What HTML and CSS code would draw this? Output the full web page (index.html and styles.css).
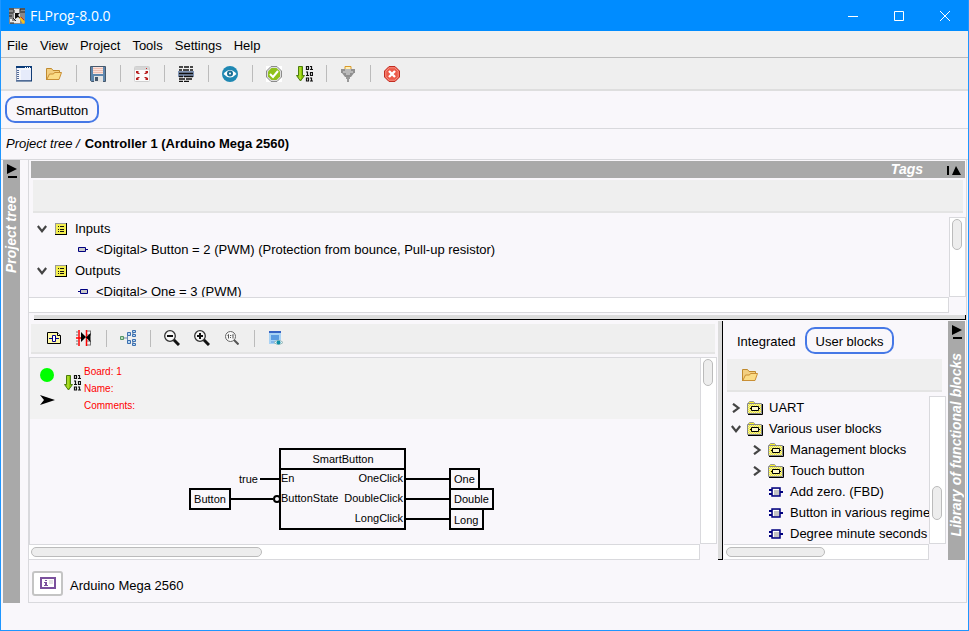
FILE: index.html
```html
<!DOCTYPE html>
<html lang="en">
<head>
    <meta charset="UTF-8">
    <meta name="viewport" content="width=device-width, initial-scale=1.0">
    <title>FLProg-8.0.0</title>
    <link rel="stylesheet" href="styles.css">
</head>
<body>
    <!-- Shared icons -->
    <svg class="sprite" aria-hidden="true">
        <defs>
            <pattern id="dither" width="2" height="2" patternUnits="userSpaceOnUse">
                <path d="M0 0h2v2H0z" fill="#f8f020"/>
                <path d="M0 0h1v1H0zM1 1h1v1H1z" fill="#e6e6c0"/>
            </pattern>
        </defs>
        <symbol id="folder-open" viewBox="0 0 16 16">
            <path d="M.5 14V2.500h5l1.500 2h6.500V7" fill="#f3cf80" stroke="#c08a2e"/>
            <path d="M.8 13.500 3.500 8h4l1-1.500h7L13 13.500z" fill="#fbdc86" stroke="#c98f35"/>
        </symbol>
        <symbol id="compile" viewBox="0 0 17 16">
            <path d="M2.500.5h4v9h2L4.500 15 .5 9.500h2z" fill="#8cc800" stroke="#4c7d0c"/>
            <path d="M4 1v12" stroke="#c3ea4e"/>
            <path d="M10.500.5h2v3h-2zM14 .5h1.500V4M14 3.500h3M10 6h1.500v4M10 9.500h3M14.500 6.500h2v3h-2zM10.500 12h2v3h-2zM14 12h1.500v3.500M14 15h3" fill="none" stroke="#111" stroke-width="1.200"/>
        </symbol>
        <symbol id="tag-list" viewBox="0 0 12 12">
            <path d="M0 0h12v12H0z" fill="#000"/>
            <path d="M0 0h11v11H0z" fill="#999"/>
            <path d="M1 1h10v10H1z" fill="#f3ee50"/>
            <path d="M3 3.500h1M3 6.500h1M3 8.500h1M5 3.500h4M5 6.500h4M5 8.500h4" stroke="#111"/>
        </symbol>
        <symbol id="block-folder" viewBox="0 0 16 14">
            <path d="M1.500 3V1.500l1-1h4l1 1V3" fill="#f7f12b" stroke="#999"/>
            <path d="M.5 2.500h14v10H.5z" fill="url(#dither)" stroke="#888"/>
            <path d="M1 13.500h14.500V3" fill="none" stroke="#000"/>
            <path d="M4.500 5.500h7v4h-7zM3 7.500h1M12 7.500h1M8 5v1M8 9v1" fill="#fffbd0" stroke="#000"/>
        </symbol>
        <symbol id="block" viewBox="0 0 14 10">
            <path d="M0 3h3M0 7h3M11 5h3" stroke="#000080" stroke-width="2"/>
            <path d="M3 1h8v8H3z" fill="#c4c4c4" stroke="#000080" stroke-width="1.500"/>
            <path d="M4 2.500h6M4.500 2v6" stroke="#fff"/>
        </symbol>
        <symbol id="tag-in" viewBox="0 0 10 6">
            <path d="M.5.5h7v4h-7zM8 2.500h2" fill="#c8c8c8" stroke="#000080"/>
        </symbol>
        <symbol id="tag-out" viewBox="0 0 10 6">
            <path d="M2.500.5h7v4h-7zM0 2.500h2" fill="#c8c8c8" stroke="#000080"/>
        </symbol>
        <symbol id="chevron-down" viewBox="0 0 10 8">
            <path d="M.8 1L5 6.200 9.200 1" fill="none" stroke="#444" stroke-width="2.200"/>
        </symbol>
        <symbol id="chevron-right" viewBox="0 0 8 10">
            <path d="M1 .8L6.500 5 1 9.200" fill="none" stroke="#444" stroke-width="2.200"/>
        </symbol>
        <symbol id="expand" viewBox="0 0 10 14">
            <path d="M0 0l10 5-10 5z"/>
            <path d="M1 12h9v2H1z"/>
        </symbol>
    </svg>

    <div class="window">
        <header class="titlebar">
            <svg class="app-icon" width="16" height="16" viewBox="0 0 16 16">
                <path d="M0 0h16v16H0z" fill="#888"/>
                <path d="M5 1h6v14H5zM1 11h5v4H1z" fill="#e9e9e9"/>
                <path d="M0 1h5M0 5h4M11 1h5M12 4h4M0 8h3M1 15h4M3 12h3M5 2v3M11 1v4M4 10l3 3" stroke="#222"/>
                <path d="M6 5h5l-2 2 6 7-6-5-3 2z" fill="#111"/>
                <path d="M10 10l2-1 4 5-2 2z" fill="#f2c11c"/>
                <path d="M12 9l3 3" stroke="#c22" />
            </svg>
            <h1>FLProg-8.0.0</h1>
            <div class="window-buttons">
                <button aria-label="Minimize"><svg width="10" height="10"><path d="M0 5.500h10" stroke="#fff"/></svg></button>
                <button aria-label="Maximize"><svg width="10" height="10"><path d="M.5.500h9v9h-9z" fill="none" stroke="#fff"/></svg></button>
                <button aria-label="Close"><svg width="10" height="10"><path d="M0 0l10 10M10 0L0 10" stroke="#fff"/></svg></button>
            </div>
        </header>

        <nav class="menubar">
            <button>File</button>
            <button>View</button>
            <button>Project</button>
            <button>Tools</button>
            <button>Settings</button>
            <button>Help</button>
        </nav>

        <div class="toolbar main-toolbar">
            <button aria-label="New project">
                <svg width="16" height="16" viewBox="0 0 16 16">
                    <path d="M.5.500h15v14H.5z" fill="#f4f6fc" stroke="#8e9bb8"/>
                    <path d="M0 0h16v2H0z" fill="#0b3c78"/>
                    <path d="M9 1.500h1M11 1.500h1M13 1.500h1" stroke="#fff"/>
                    <path d="M5 4h10v10H5z" fill="#e6ebfa"/>
                    <path d="M1 4.500h2M1 6.500h2M1 8.500h2M1 10.500h2M1 12.500h2" stroke="#526b96"/>
                    <path d="M0 15h16M15.500 2v13" stroke="#123d75"/>
                </svg>
            </button>
            <button aria-label="Open project"><svg width="16" height="16"><use href="#folder-open"/></svg></button>
            <span class="separator"></span>
            <button aria-label="Save">
                <svg width="16" height="16" viewBox="0 0 16 16">
                    <path d="M.5.500h15v15h-14l-1-1z" fill="#5f87ad" stroke="#46586c"/>
                    <path d="M3 1h10v7H3z" fill="#fbe3dc"/>
                    <path d="M3 2.500h10M3 4.500h10M3 6.500h10" stroke="#eebfb2"/>
                    <path d="M4 10h9v6H4z" fill="#e3e3e3"/>
                    <path d="M5 11h3v4H5z" fill="#46586c"/>
                </svg>
            </button>
            <span class="separator"></span>
            <button aria-label="Fit to window">
                <svg width="16" height="16" viewBox="0 0 16 16">
                    <rect x=".5" y=".5" width="15" height="15" rx="1" fill="#fbfbfb" stroke="#cfcfcf"/>
                    <path d="M1 1h14v3H1z" fill="#d6d6d6"/>
                    <path d="M12 2.500h1" stroke="#c22"/>
                    <path d="M2 5h3L4 6l2 2-2 0-2-1zM14 5h-3l1 1-2 2 2 0 2-1zM2 14h3l-1-1 2-2-2 0-2 1zM14 14h-3l1-1-2-2 2 0 2 1z" fill="#b81d1d"/>
                </svg>
            </button>
            <span class="separator"></span>
            <button aria-label="Tag table">
                <svg width="16" height="16" viewBox="0 0 16 16">
                    <path d="M0 5h16v6H0z" fill="#8094b4"/>
                    <path d="M1 1h4M6 1h5M12 1h3M1 4h3M5 4h6M12 4h3M1 7.500h14M1 10.500h4M6 10.500h9M1 13h6M8 13h6M1 15.500h4M6 15.500h5" stroke="#111" stroke-width="1.500"/>
                </svg>
            </button>
            <span class="separator"></span>
            <button aria-label="Preview">
                <svg width="16" height="16" viewBox="0 0 16 16">
                    <circle cx="8" cy="8" r="8" fill="#1f88b3"/>
                    <path d="M1.500 8Q8 0 14.500 8 8 15 1.500 8z" fill="#fff"/>
                    <circle cx="8" cy="7.500" r="3" fill="#1b6f95"/>
                    <circle cx="8" cy="7.500" r="1" fill="#fff"/>
                </svg>
            </button>
            <span class="separator"></span>
            <button aria-label="Check">
                <svg width="16" height="16" viewBox="0 0 16 16">
                    <path d="M0 0h16v16H0z" fill="#fff"/>
                    <path d="M5 .5h6L15.500 5v6L11 15.500H5L.5 11V5z" fill="#ddd" stroke="#8b8b8b"/>
                    <path d="M5.500 2h5L14 5.500v5L10.500 14h-5L2 10.500v-5z" fill="#8fc11b"/>
                    <path d="M4 8l3 3 5-6" fill="none" stroke="#fff" stroke-width="2"/>
                </svg>
            </button>
            <button aria-label="Compile"><svg width="17" height="16"><use href="#compile"/></svg></button>
            <span class="separator"></span>
            <button aria-label="Port">
                <svg width="14" height="16" viewBox="0 0 14 16">
                    <path d="M4 .5h6v3H4z" fill="#fff0b8" stroke="#d99a2b"/>
                    <path d="M0 3h14v4h-1L10 11H4L1 7H0z" fill="#909090"/>
                    <path d="M4 4h6M2 6h10M5 8h4" stroke="#e2e2e2"/>
                    <path d="M5 11h4v2H8v3H6v-3H5z" fill="#999"/>
                </svg>
            </button>
            <span class="separator"></span>
            <button aria-label="Close project">
                <svg width="16" height="16" viewBox="0 0 16 16">
                    <path d="M5 .5h6L15.500 5v6L11 15.500H5L.5 11V5z" fill="#ec5b4a" stroke="#c22d22"/>
                    <path d="M5.200 1.800h5.600L14.200 5.200v5.600L10.800 14.200H5.200L1.800 10.800V5.200z" fill="none" stroke="#f79a8d" stroke-width=".8"/>
                    <path d="M5 5l6 6M11 5l-6 6" stroke="#fff" stroke-width="2.400"/>
                </svg>
            </button>
        </div>

        <div class="project-tabs">
            <button class="tab active">SmartButton</button>
        </div>

        <div class="breadcrumb"><i>Project tree /</i><b>Controller 1 (Arduino Mega 2560)</b></div>

        <main class="main">
            <aside class="side-strip">
                <button aria-label="Show project tree"><svg width="10" height="14"><use href="#expand"/></svg></button>
                <span>Project tree</span>
            </aside>

            <div class="content">
                <section class="tags-panel">
                    <div class="tags-header">
                        <h2>Tags</h2>
                        <button aria-label="Collapse tags"><svg width="14" height="10"><path d="M0 1h2v9H0zM5 10l4-9 5 9z"/></svg></button>
                    </div>
                    <div class="tags-toolbar"></div>
                    <div class="tags-body">
                        <ul class="tree tags-tree">
                            <li class="group"><svg width="10" height="8"><use href="#chevron-down"/></svg><svg class="icon" width="12" height="12"><use href="#tag-list"/></svg>Inputs</li>
                            <li class="leaf"><svg class="icon" width="10" height="6"><use href="#tag-in"/></svg>&lt;Digital&gt; Button = 2 (PWM) (Protection from bounce, Pull-up resistor)</li>
                            <li class="group"><svg width="10" height="8"><use href="#chevron-down"/></svg><svg class="icon" width="12" height="12"><use href="#tag-list"/></svg>Outputs</li>
                            <li class="leaf"><svg class="icon" width="10" height="6"><use href="#tag-out"/></svg>&lt;Digital&gt; One = 3 (PWM)</li>
                        </ul>
                        <div class="scroll-y"><div class="thumb tags-thumb"></div></div>
                        <div class="scroll-x"></div>
                    </div>
                </section>

                <div class="splitter-x"></div>

                <div class="workspace">
                    <section class="editor">
                        <div class="toolbar editor-toolbar">
                            <button aria-label="Add board">
                                <svg width="14" height="12" viewBox="0 0 14 12">
                                    <path d="M.5.500h10l3 3v8H.5z" fill="#fff9a8" stroke="#000"/>
                                    <path d="M10.500.500v3h3" fill="#fff" stroke="#000"/>
                                    <path d="M5.500 3.500h3v6h-3zM2 6.500h3.500M8.500 6.500H12" fill="#fff" stroke="#00008b"/>
                                </svg>
                            </button>
                            <button aria-label="Go to board">
                                <svg width="16" height="16" viewBox="0 0 16 16">
                                    <path d="M0 2h2M0 5h2M0 11h2M0 14h2M11 1h4M11 5h4M11 11h4M11 15h4M14.500 1v4M14.500 11v4" stroke="#777"/>
                                    <path d="M3 0v16M0 8h6M10.500 0v16" stroke="#f00" stroke-width="1.500"/>
                                    <path d="M5 2v10l5-5zM14.500 3v9L10 7.500z"/>
                                </svg>
                            </button>
                            <span class="separator"></span>
                            <button aria-label="Block tree">
                                <svg width="16" height="16" viewBox="0 0 16 16">
                                    <path d="M3 8h4M7.500 3.500v9M7.500 3.500h2M7.500 12.500h2M12 3h1V1.500M13 5.500V3M12 13h1v1.500M13 10.500V13" fill="none" stroke="#6687b0"/>
                                    <path d="M.5 6.500h3v3h-3z" fill="#b9e0b9" stroke="#549466"/>
                                    <path d="M7.500 2.500h3v3h-3zM12.500.500h3v2h-3zM12.500 4.500h3v2h-3zM7.500 10.500h3v3h-3zM12.500 9.500h3v2h-3zM12.500 13.500h3v2h-3z" fill="#b5d8f5" stroke="#3d6fae"/>
                                </svg>
                            </button>
                            <span class="separator"></span>
                            <button aria-label="Zoom out">
                                <svg width="16" height="16" viewBox="0 0 16 16">
                                    <path d="M9.500 9.500l5.500 5.500" stroke="#111" stroke-width="3"/>
                                    <circle cx="6" cy="6" r="5.300" fill="#f8f8f8" stroke="#333" stroke-width="1.300"/>
                                    <path d="M3 6h6" stroke="#111" stroke-width="2"/>
                                </svg>
                            </button>
                            <button aria-label="Zoom in">
                                <svg width="16" height="16" viewBox="0 0 16 16">
                                    <path d="M9.500 9.500l5.500 5.500" stroke="#111" stroke-width="3"/>
                                    <circle cx="6" cy="6" r="5.300" fill="#f8f8f8" stroke="#333" stroke-width="1.300"/>
                                    <path d="M3 6h6M6 3v6" stroke="#111" stroke-width="2"/>
                                </svg>
                            </button>
                            <button aria-label="Actual size">
                                <svg width="14" height="14" viewBox="0 0 14 14">
                                    <path d="M9 9l4.500 4.500" stroke="#555" stroke-width="2"/>
                                    <circle cx="5.500" cy="5.500" r="5" fill="#f8f8f8" stroke="#666"/>
                                    <path d="M3.500 3.500v4M8 3.500v4M2.500 4.500l1-1M7 4.500l1-1M5.500 4v1M5.500 6v1" stroke="#555"/>
                                </svg>
                            </button>
                            <span class="separator"></span>
                            <button aria-label="View settings">
                                <svg width="14" height="15" viewBox="0 0 14 15">
                                    <path d="M0 0h12v13H0z" fill="#a9d3f5"/>
                                    <path d="M0 0h12v2H0z" fill="#3764c4"/>
                                    <path d="M2 4h8v5H2z" fill="#5b9be0"/>
                                    <path d="M2 11h5" stroke="#5b9be0"/>
                                    <path d="M5 11.500q4.500-4.500 9 0-4.500 4-9 0z" fill="#e8f4f8" stroke="#9bb"/>
                                    <circle cx="9.500" cy="11.500" r="2" fill="#0d8fa8"/>
                                </svg>
                            </button>
                        </div>

                        <div class="editor-body">
                            <div class="canvas">
                                <div class="board-header">
                                    <div class="board-state">
                                        <svg width="14" height="14"><circle cx="7" cy="7" r="7" fill="#0f0"/></svg>
                                        <svg width="15" height="10"><path d="M0 0l15 5-15 5 4-5z"/></svg>
                                    </div>
                                    <svg class="board-compile" width="17" height="16"><use href="#compile"/></svg>
                                    <ul class="board-info">
                                        <li>Board: 1</li>
                                        <li>Name:</li>
                                        <li>Comments:</li>
                                    </ul>
                                </div>
                                <svg class="diagram" width="520" height="124" viewBox="0 0 520 124">
                                    <!-- wires -->
                                    <path class="wire" d="M230 60h19M201 80h42M376 60h44M376 80h44M376 100h44"/>
                                    <circle class="wire" cx="247" cy="80" r="3"/>
                                    <!-- function block -->
                                    <rect class="node" x="250" y="30" width="125" height="80"/>
                                    <path class="wire" d="M250 50h125"/>
                                    <text x="313" y="44" text-anchor="middle">SmartButton</text>
                                    <text x="251" y="63">En</text>
                                    <text x="251" y="83">ButtonState</text>
                                    <text x="373" y="63" text-anchor="end">OneClick</text>
                                    <text x="373" y="83" text-anchor="end">DoubleClick</text>
                                    <text x="373" y="103" text-anchor="end">LongClick</text>
                                    <!-- inputs -->
                                    <text x="228" y="64" text-anchor="end">true</text>
                                    <rect class="node" x="160" y="70" width="40" height="20"/>
                                    <text x="180" y="84" text-anchor="middle">Button</text>
                                    <!-- outputs -->
                                    <rect class="node" x="420" y="50" width="29" height="20"/>
                                    <rect class="node" x="420" y="90" width="33" height="20"/>
                                    <rect class="node" x="420" y="70" width="43" height="20"/>
                                    <text x="424" y="64">One</text>
                                    <text x="424" y="84">Double</text>
                                    <text x="424" y="105">Long</text>
                                </svg>
                            </div>
                            <div class="scroll-y"><div class="thumb editor-thumb-y"></div></div>
                            <div class="scroll-x"><div class="thumb editor-thumb-x"></div></div>
                        </div>
                    </section>

                    <div class="splitter-y"></div>

                    <section class="library">
                        <div class="library-tabs">
                            <button class="tab">Integrated</button>
                            <button class="tab active">User blocks</button>
                        </div>
                        <div class="toolbar library-toolbar">
                            <button aria-label="Open library"><svg width="16" height="16"><use href="#folder-open"/></svg></button>
                        </div>
                        <div class="library-body">
                            <ul class="tree library-tree">
                                <li><svg class="chevron" width="8" height="10"><use href="#chevron-right"/></svg><svg class="icon" width="16" height="14"><use href="#block-folder"/></svg>UART</li>
                                <li><svg class="chevron" width="10" height="8"><use href="#chevron-down"/></svg><svg class="icon" width="16" height="14"><use href="#block-folder"/></svg>Various user blocks</li>
                                <li class="nested"><svg class="chevron" width="8" height="10"><use href="#chevron-right"/></svg><svg class="icon" width="16" height="14"><use href="#block-folder"/></svg>Management blocks</li>
                                <li class="nested"><svg class="chevron" width="8" height="10"><use href="#chevron-right"/></svg><svg class="icon" width="16" height="14"><use href="#block-folder"/></svg>Touch button</li>
                                <li class="item"><svg class="icon" width="14" height="10"><use href="#block"/></svg>Add zero. (FBD)</li>
                                <li class="item"><svg class="icon" width="14" height="10"><use href="#block"/></svg>Button in various regime</li>
                                <li class="item"><svg class="icon" width="14" height="10"><use href="#block"/></svg>Degree minute seconds</li>
                            </ul>
                            <div class="scroll-y"><div class="thumb library-thumb-y"></div></div>
                            <div class="scroll-x"><div class="thumb library-thumb-x"></div></div>
                        </div>
                    </section>

                    <aside class="side-strip library-strip">
                        <button aria-label="Show library"><svg width="10" height="14"><use href="#expand"/></svg></button>
                        <span>Library of functional blocks</span>
                    </aside>
                </div>

                <div class="controller-bar">
                    <button aria-label="Controller info">
                        <svg width="16" height="12" viewBox="0 0 16 12">
                            <rect x="1" y="1" width="14" height="10" fill="#fff" stroke="#7b519d" stroke-width="2"/>
                            <path d="M4 5h3v3h1v1H4V8h1V6H4zM5 3h2v1H5z" fill="#7b519d"/>
                            <path d="M9 3h4v4H9z" fill="#e4e4e4"/>
                        </svg>
                    </button>
                    <span>Arduino Mega 2560</span>
                </div>
            </div>
        </main>

        <footer class="statusbar"></footer>
    </div>
</body>
</html>
```
FILE: styles.css
```css
* {
    margin: 0;
    padding: 0;
    box-sizing: border-box;
}

body {
    font-family: "Liberation Sans", Arial, sans-serif;
    font-size: 13px;
    color: #000;
    background: #f9f7fb;
}

button {
    background: none;
    border: none;
    font: inherit;
    color: inherit;
}

ul {
    list-style: none;
}

svg {
    display: block;
    flex-shrink: 0;
}

/* Kept rendered so the pattern fill stays available */
.sprite {
    position: absolute;
    width: 0;
    height: 0;
}

.window {
    display: flex;
    flex-direction: column;
    height: 100vh;
    border: 1px solid #1e96ff;
    border-top: none;
}

/* Title bar */
.titlebar {
    display: flex;
    align-items: center;
    height: 31px;
    padding-left: 8px;
    background: #008cff;
    color: #fff;
}

.titlebar h1 {
    flex: 1;
    margin-left: 5px;
    font: 400 14px "Open Sans", sans-serif;
}

.window-buttons {
    display: flex;
}

.window-buttons button {
    display: flex;
    align-items: center;
    justify-content: center;
    width: 46px;
    height: 30px;
}

/* Menu and toolbars */
.menubar {
    display: flex;
    height: 27px;
    background: #f0f0f0;
    border-bottom: 1px solid #bbb;
}

.menubar button {
    padding: 2px 6px 0;
}

.toolbar {
    display: flex;
    align-items: center;
    background: #efefef;
    border-bottom: 2px solid #e4e4e4;
}

.toolbar button {
    display: flex;
    align-items: center;
    justify-content: center;
    width: 30px;
    height: 26px;
}

.separator {
    width: 14px;
    height: 17px;
    background: linear-gradient(#bbb, #bbb) center / 1px 100% no-repeat;
}

.main-toolbar {
    height: 33px;
    padding-left: 8px;
    border-bottom-color: #dedede;
}

.project-tabs {
    height: 38px;
    padding: 5px 4px;
    border-bottom: 1px solid #d9d9dd;
}

.tab {
    height: 27px;
    padding: 1px 7px 0;
    border: 2px solid transparent;
    border-radius: 10px;
}

.tab.active {
    padding: 1px 9px 0;
    border-color: #4678e6;
}

.breadcrumb {
    display: flex;
    gap: 5px;
    height: 31px;
    padding-left: 5px;
    line-height: 30px;
    border-bottom: 1px solid #d9d9dd;
}

/* Main area */
.main {
    display: flex;
    flex: 1;
    min-height: 0;
    padding: 0 1px 0 2px;
}

.side-strip {
    display: flex;
    flex-direction: column;
    align-items: center;
    gap: 18px;
    flex-shrink: 0;
    width: 17px;
    padding-top: 4px;
    background: #a9a9a9;
}

.side-strip span,
.tags-header h2 {
    font-size: 14px;
    font-weight: bold;
    font-style: italic;
    line-height: 17px;
    color: #fff;
}

.side-strip span {
    white-space: nowrap;
    writing-mode: vertical-rl;
    transform: rotate(180deg);
}

.content {
    display: flex;
    flex-direction: column;
    flex: 1;
    min-width: 0;
    margin-left: 8px;
    border: solid #d9d9dd;
    border-width: 0 1px 1px;
}

.tags-panel {
    flex-shrink: 0;
}

.tags-header {
    display: flex;
    align-items: center;
    justify-content: flex-end;
    gap: 24px;
    height: 17px;
    margin: 1px 1px 2px 2px;
    padding-right: 4px;
    background: #a9a9a9;
}

.tags-toolbar {
    height: 33px;
    margin: 0 3px 4px 4px;
    background: #efefef;
    border-bottom: 2px solid #e4e4e4;
}

.tags-body,
.editor-body,
.library-body {
    display: grid;
    grid-template-columns: 1fr 17px;
    grid-template-rows: 1fr 16px;
    min-height: 0;
}

.tags-body {
    height: 96px;
}

.tree {
    min-width: 0;
    padding-top: 1px;
    overflow: hidden;
    white-space: nowrap;
}

.tree li {
    display: flex;
    align-items: center;
    height: 21px;
}

.tags-tree .group {
    gap: 8px;
    padding-left: 8px;
}

.tags-tree .leaf {
    gap: 8px;
    padding-left: 49px;
}

/* Scrollbars */
.scroll-y,
.scroll-x {
    background: #fff;
    border: 1px solid #d9d9dd;
}

.scroll-x {
    border-left: none;
}

.thumb {
    background: #ededed;
    border: 1px solid #bbb;
    border-radius: 5px;
}

.scroll-y .thumb {
    width: 10px;
    margin: 1px 0 0 2px;
}

.scroll-x .thumb {
    height: 10px;
    margin: 2px 0 0 2px;
}

.tags-thumb {
    height: 31px;
}

.editor-thumb-y {
    height: 27px;
}

.editor-thumb-x {
    width: 231px;
}

.scroll-y .library-thumb-y {
    height: 34px;
    margin-top: 89px;
}

.library-thumb-x {
    width: 99px;
}

/* Splitters */
.splitter-x {
    flex-shrink: 0;
    height: 5px;
    margin: 2px 0 1px 5px;
    background: #dcdcdc;
    border: solid #000;
    border-width: 0 1px 1px 0;
}

.splitter-y {
    width: 5px;
    background: #dcdcdc;
    border: solid #000;
    border-width: 0 1px 1px 0;
}

/* Editor */
.workspace {
    display: flex;
    flex: 1;
    min-height: 0;
    padding-right: 1px;
}

.editor {
    display: flex;
    flex-direction: column;
    flex: 1;
    min-width: 0;
}

.editor-toolbar {
    height: 30px;
    margin: 3px 3px 3px 2px;
    padding-left: 8px;
}

.editor-body {
    flex: 1;
    margin-right: 1px;
}

.canvas {
    min-width: 0;
    overflow: hidden;
    border: solid #d9d9dd;
    border-width: 1px 0 0 1px;
}

.board-header {
    display: flex;
    align-items: flex-start;
    height: 61px;
    padding: 5px 0 0 9px;
    background: #f2f2f2;
}

.board-state {
    display: flex;
    flex-direction: column;
    gap: 13px;
    width: 25px;
    padding: 5px 0 0 1px;
}

.board-compile {
    margin: 12px 3px 0 0;
}

.board-info {
    font-size: 10px;
    line-height: 17px;
    color: #f00;
}

.diagram text {
    font-size: 11px;
}

.wire,
.node {
    fill: none;
    stroke: #000;
    stroke-width: 2px;
}

/* Library */
.library {
    display: flex;
    flex-direction: column;
    width: 224px;
    flex-shrink: 0;
}

.library-tabs {
    display: flex;
    padding: 6px 5px 5px;
}

.library-toolbar {
    height: 33px;
    margin: 0 5px 4px 4px;
    padding-left: 8px;
}

.library-body {
    flex: 1;
    padding: 0 1px;
}

.library-tree li {
    padding-left: 7px;
}

.library-tree .nested {
    padding-left: 28px;
}

.library-tree .item {
    padding-left: 45px;
}

.library-tree .chevron {
    width: 10px;
    margin-right: 6px;
}

.library-tree .icon {
    margin-right: 6px;
}

.library-tree .item .icon {
    margin-right: 7px;
}

.library-strip {
    margin-left: 1px;
    gap: 14px;
}

/* Controller bar */
.controller-bar {
    display: flex;
    align-items: center;
    gap: 7px;
    height: 42px;
    padding: 4px 3px 0;
}

.controller-bar button {
    display: flex;
    align-items: center;
    justify-content: center;
    width: 31px;
    height: 25px;
    background: #fff;
    border: 2px solid #c4c4c4;
    border-radius: 3px;
}

.controller-bar span {
    padding-top: 4px;
}

.statusbar {
    height: 27px;
}
```
